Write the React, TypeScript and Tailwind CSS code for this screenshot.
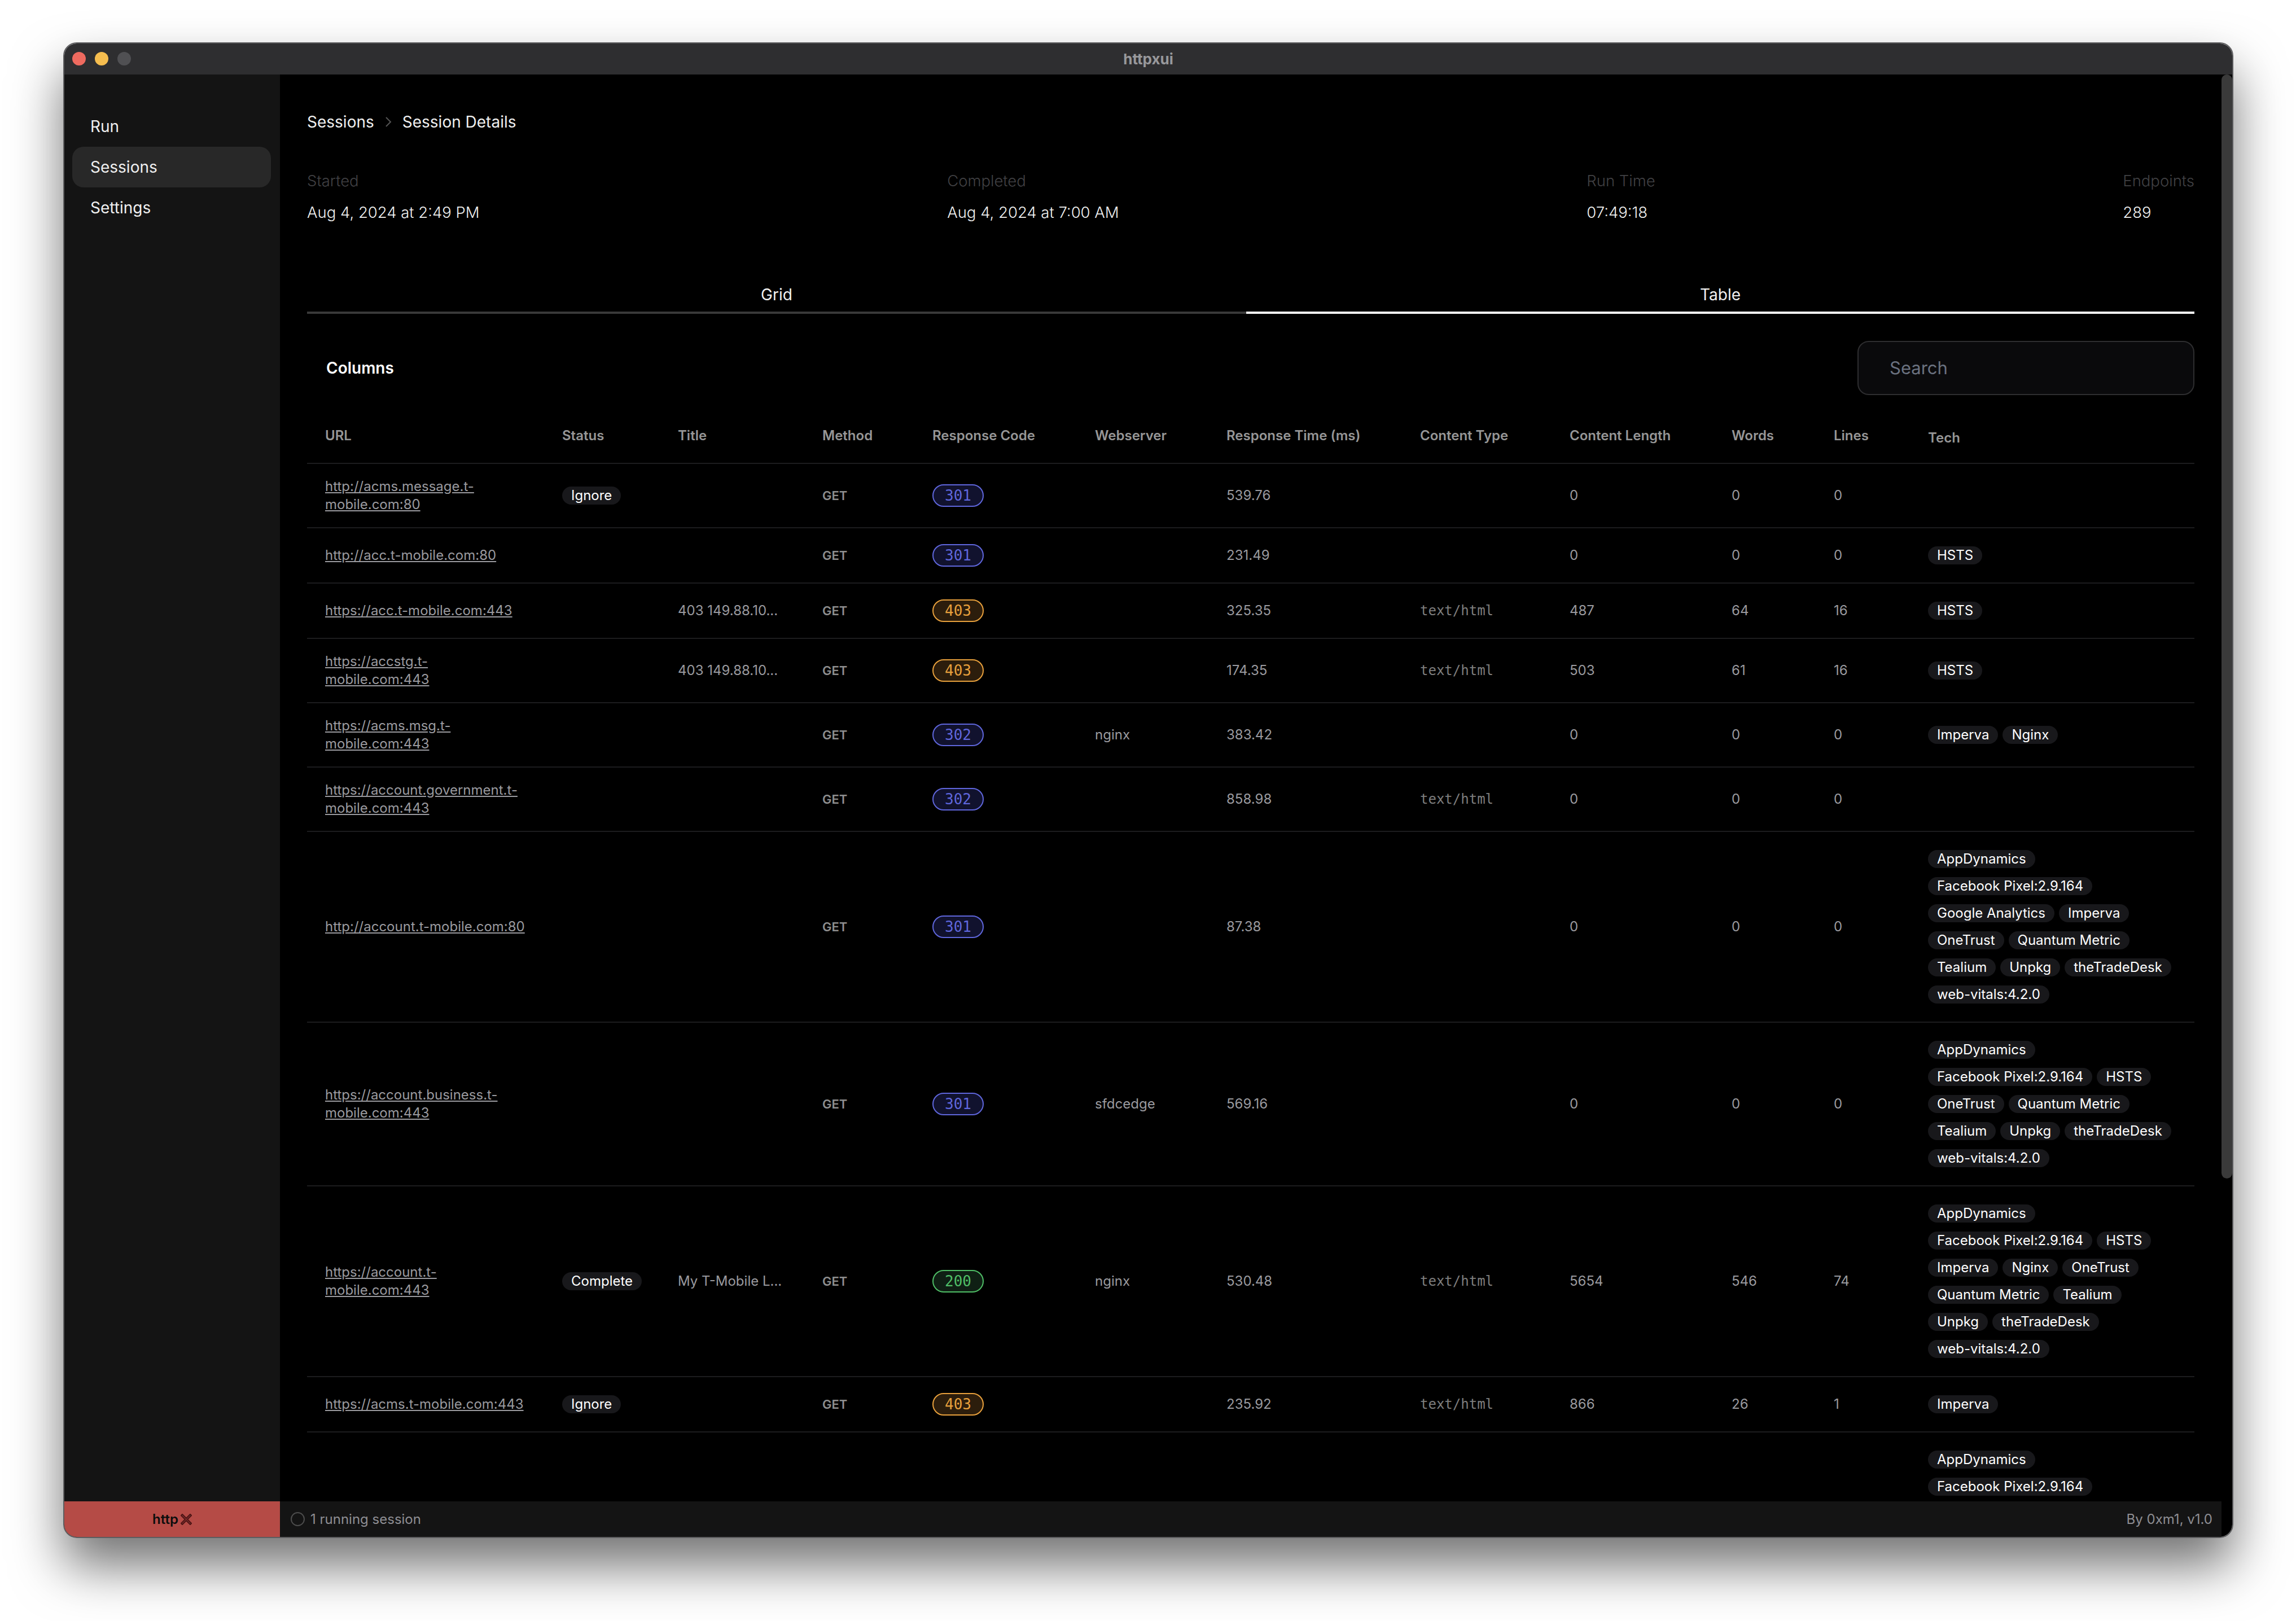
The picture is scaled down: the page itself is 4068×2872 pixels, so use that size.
import * as React from "react";

type Row = {
  url: string;
  status?: string;
  title?: string;
  code?: number;
  server?: string;
  time?: string;
  type?: string;
  length?: string;
  words?: string;
  lines?: string;
  tech?: string[];
};

const FB = "Facebook Pixel:2.9.164";
const VITALS = "web-vitals:4.2.0";

const rows: Row[] = [
  { url: "http://acms.message.t-mobile.com:80", status: "Ignore", code: 301, time: "539.76", length: "0", words: "0", lines: "0" },
  { url: "http://acc.t-mobile.com:80", code: 301, time: "231.49", length: "0", words: "0", lines: "0", tech: ["HSTS"] },
  { url: "https://acc.t-mobile.com:443", title: "403 149.88.10...", code: 403, time: "325.35", type: "text/html", length: "487", words: "64", lines: "16", tech: ["HSTS"] },
  { url: "https://accstg.t-mobile.com:443", title: "403 149.88.10...", code: 403, time: "174.35", type: "text/html", length: "503", words: "61", lines: "16", tech: ["HSTS"] },
  { url: "https://acms.msg.t-mobile.com:443", code: 302, server: "nginx", time: "383.42", length: "0", words: "0", lines: "0", tech: ["Imperva", "Nginx"] },
  { url: "https://account.government.t-mobile.com:443", code: 302, time: "858.98", type: "text/html", length: "0", words: "0", lines: "0" },
  {
    url: "http://account.t-mobile.com:80",
    code: 301,
    time: "87.38",
    length: "0",
    words: "0",
    lines: "0",
    tech: ["AppDynamics", FB, "Google Analytics", "Imperva", "OneTrust", "Quantum Metric", "Tealium", "Unpkg", "theTradeDesk", VITALS],
  },
  {
    url: "https://account.business.t-mobile.com:443",
    code: 301,
    server: "sfdcedge",
    time: "569.16",
    length: "0",
    words: "0",
    lines: "0",
    tech: ["AppDynamics", FB, "HSTS", "OneTrust", "Quantum Metric", "Tealium", "Unpkg", "theTradeDesk", VITALS],
  },
  {
    url: "https://account.t-mobile.com:443",
    status: "Complete",
    title: "My T-Mobile L...",
    code: 200,
    server: "nginx",
    time: "530.48",
    type: "text/html",
    length: "5654",
    words: "546",
    lines: "74",
    tech: ["AppDynamics", FB, "HSTS", "Imperva", "Nginx", "OneTrust", "Quantum Metric", "Tealium", "Unpkg", "theTradeDesk", VITALS],
  },
  { url: "https://acms.t-mobile.com:443", status: "Ignore", code: 403, time: "235.92", type: "text/html", length: "866", words: "26", lines: "1", tech: ["Imperva"] },
  { url: "", tech: ["AppDynamics", FB] },
];

const columns = [
  { name: "URL", width: "w-[420px]" },
  { name: "Status", width: "w-[205px]" },
  { name: "Title", width: "w-[256px]" },
  { name: "Method", width: "w-[195px]" },
  { name: "Response Code", width: "w-[288px]" },
  { name: "Webserver", width: "w-[233px]" },
  { name: "Response Time (ms)", width: "w-[343px]" },
  { name: "Content Type", width: "w-[265px]" },
  { name: "Content Length", width: "w-[287px]" },
  { name: "Words", width: "w-[181px]" },
  { name: "Lines", width: "w-[167px]" },
];

function Pill({ children }: { children: React.ReactNode }) {
  return (
    <span className="inline-flex h-8 items-center rounded-full bg-[#18181b] px-4 text-2xl whitespace-nowrap text-white">
      {children}
    </span>
  );
}

function CodeBadge({ code }: { code: number }) {
  const color =
    code === 200
      ? "border-[#4fbe66] bg-[#0f1f14] text-[#4fbe66]"
      : code === 403
        ? "border-[#e8a03c] bg-[#2c1d0c] text-[#e8a03c]"
        : "border-[#5f66dc] bg-[#11122e] text-[#5f66dc]";
  return (
    <span
      className={`inline-flex h-10 w-[91px] items-center justify-center rounded-full border-2 font-['DejaVu_Sans_Mono',monospace] text-[26px] ${color}`}
    >
      {code}
    </span>
  );
}

function Meta({ label, value }: { label: string; value: string }) {
  return (
    <div className="font-light">
      <div className="text-[27.5px] leading-10 text-[#414144]">{label}</div>
      <div className="mt-4 text-[27.5px] leading-10 text-[#f0f0f0]">{value}</div>
    </div>
  );
}

function Sidebar() {
  return (
    <aside className="w-[382px] shrink-0 bg-[#141414] pt-14 pr-4 pl-[14px] text-[28px] text-[#f0f0f0]">
      <div className="flex h-[72px] items-center pl-8">Run</div>
      <div className="flex h-[72px] items-center rounded-[20px] bg-[#282828] pl-8">Sessions</div>
      <div className="flex h-[72px] items-center pl-8">Settings</div>
    </aside>
  );
}

function SessionTable() {
  const cell = "px-8 py-6 text-2xl text-[#9a9a9f]";
  return (
    <table className="mt-6 w-full table-fixed">
      <thead>
        <tr className="border-b-2 border-[#1c1c1e]">
          {columns.map((c) => (
            <th key={c.name} className={`${c.width} px-8 py-8 text-left text-2xl font-semibold text-[#969696]`}>
              {c.name}
            </th>
          ))}
          <th className="px-8 pt-9 pb-7 text-left text-2xl font-semibold text-[#969696]">Tech</th>
        </tr>
      </thead>
      <tbody>
        {rows.map((r, i) => (
          <tr key={i} className="border-b-2 border-[#1c1c1e]">
            <td className={cell}>
              {r.url && <a className="underline underline-offset-2">{r.url}</a>}
            </td>
            <td className={cell}>{r.status && <Pill>{r.status}</Pill>}</td>
            <td className={cell}>{r.title}</td>
            <td className="px-8 py-6 text-[22px] font-semibold text-[#8e8e8e]">{r.code && "GET"}</td>
            <td className="px-8 py-6">{r.code && <CodeBadge code={r.code} />}</td>
            <td className={cell}>{r.server}</td>
            <td className={cell}>{r.time}</td>
            <td className={`${cell} font-['DejaVu_Sans_Mono',monospace] !text-[#7d7d7d]`}>{r.type}</td>
            <td className={cell}>{r.length}</td>
            <td className={cell}>{r.words}</td>
            <td className={cell}>{r.lines}</td>
            <td className="px-8 py-6">
              {r.tech && (
                <div className="flex flex-wrap gap-x-2 gap-y-4 py-2">
                  {r.tech.map((t) => (
                    <Pill key={t}>{t}</Pill>
                  ))}
                </div>
              )}
            </td>
          </tr>
        ))}
      </tbody>
    </table>
  );
}

function Main() {
  return (
    <main className="relative flex-1 overflow-hidden bg-black pt-16 pr-[67px] pl-12 text-[#f0f0f0]">
      <div className="flex h-10 items-center text-[28px]">
        <span>Sessions</span>
        <svg className="mx-[19px] h-5 w-3 text-[#555]" viewBox="0 0 12 20" fill="none" stroke="currentColor" strokeWidth={2}>
          <path d="M2 2l8 8-8 8" />
        </svg>
        <span>Session Details</span>
      </div>

      <div className="mt-16 flex justify-between">
        <Meta label="Started" value="Aug 4, 2024 at 2:49 PM" />
        <Meta label="Completed" value="Aug 4, 2024 at 7:00 AM" />
        <Meta label="Run Time" value="07:49:18" />
        <Meta label="Endpoints" value="289" />
      </div>

      <div className="mt-[106px] flex text-[28px]">
        <div className="w-[1664px] border-b-4 border-[#3a3a3a] pb-[10px] text-center leading-10">Grid</div>
        <div className="flex-1 border-b-4 border-white pb-[10px] text-center leading-10">Table</div>
      </div>

      <div className="mt-12 flex items-center justify-between pl-[34px]">
        <span className="text-[28px] font-semibold text-white">Columns</span>
        <div className="flex h-[96px] w-[597px] items-center rounded-[20px] border-2 border-[#2e2e30] bg-[#0a0a0c] px-[55px] text-[31px] text-[#6b7280]">
          Search
        </div>
      </div>

      <SessionTable />

      {/* overlay scrollbar */}
      <div className="absolute top-0 right-0 h-[1956px] w-[19px] rounded-full bg-[#3a3a3a]" />
    </main>
  );
}

function Footer() {
  return (
    <footer className="flex h-[63px] shrink-0 bg-black text-2xl text-[#8e8e93]">
      <div className="flex w-[382px] items-center justify-center gap-1 bg-[#b54b46]">
        <span className="font-semibold text-[#0d0d0d]">http</span>
        <svg className="h-5 w-5" viewBox="0 0 20 20" fill="none" strokeLinecap="square">
          <path d="M3 3l14 14M17 3L3 17" stroke="#4a1515" strokeWidth={5} />
          <path d="M3 3l14 14M17 3L3 17" stroke="#7c2a2a" strokeWidth={1.5} />
        </svg>
      </div>
      <div className="flex flex-1 items-center bg-[#141414] pr-4 pl-[19px]">
        <span className="h-[25px] w-[25px] rounded-full border-2 border-[#4d4d4d]" />
        <span className="ml-[10px]">1 running session</span>
        <span className="ml-auto">By 0xm1, v1.0</span>
      </div>
      <div className="w-[19px]" />
    </footer>
  );
}

export default function App() {
  return (
    <div className="h-[2872px] w-[4068px] overflow-hidden bg-white pt-[75px] pl-[112px] font-['Inter',sans-serif] antialiased">
      <div className="flex h-[2650px] w-[3845px] flex-col overflow-hidden rounded-[24px] border-2 border-[#5c5c5e] shadow-[0_50px_90px_rgba(0,0,0,0.55)]">
        <header className="relative flex h-[55px] shrink-0 items-center justify-center bg-[#2e2e30] text-[26px] font-bold text-[#98989b]">
          <div className="absolute top-[15px] left-[14px] flex gap-4">
            <span className="h-6 w-6 rounded-full bg-[#ee6a5f]" />
            <span className="h-6 w-6 rounded-full bg-[#f5bd4f]" />
            <span className="h-6 w-6 rounded-full bg-[#505053]" />
          </div>
          httpxui
        </header>
        <div className="flex min-h-0 flex-1">
          <Sidebar />
          <Main />
        </div>
        <Footer />
      </div>
    </div>
  );
}
